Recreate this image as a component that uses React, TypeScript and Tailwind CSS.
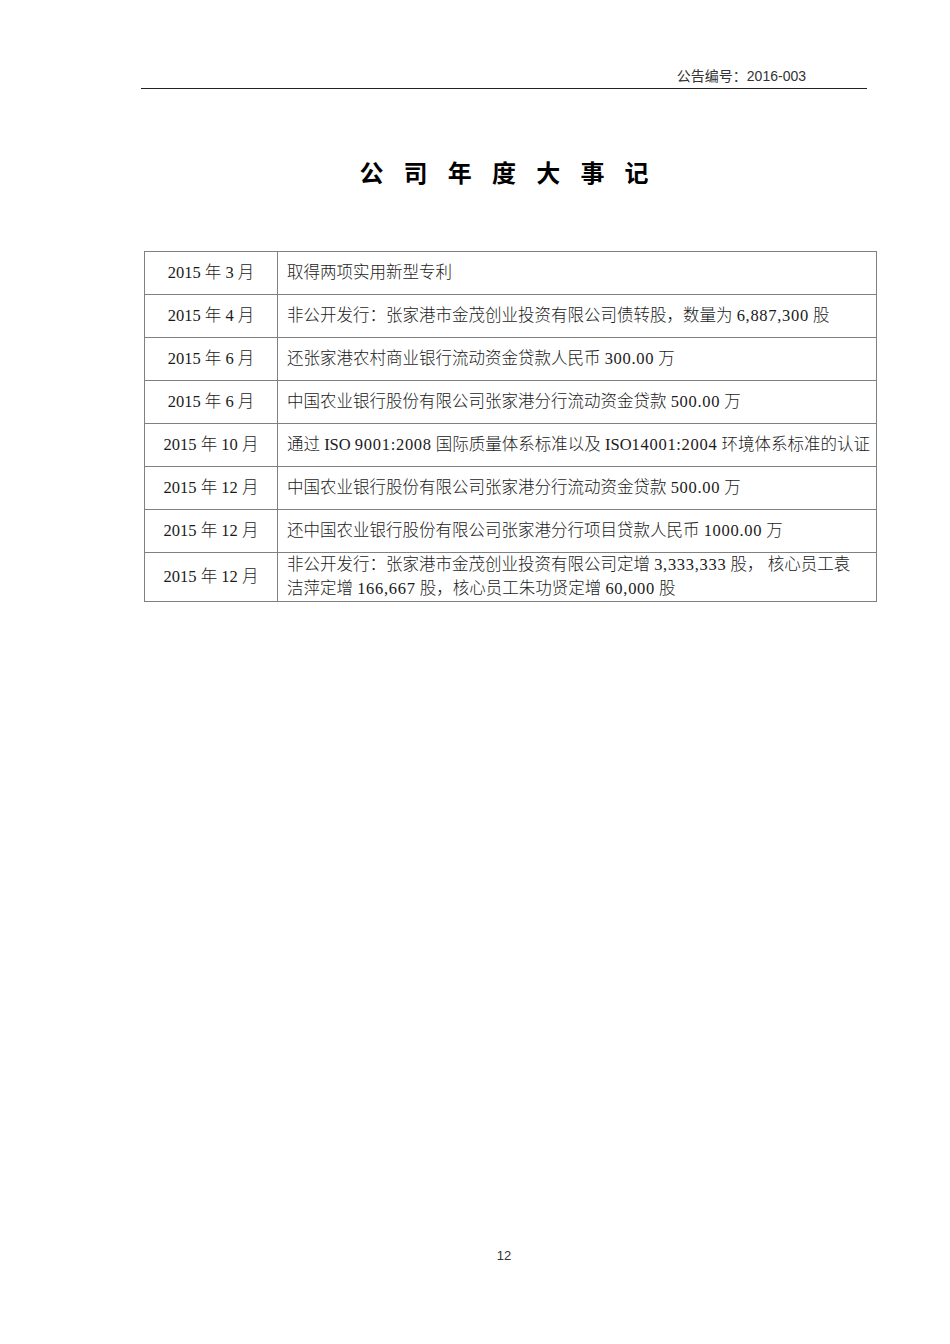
import { Fragment } from "react";

// numbers in the original are half-width SimSun; Times digits run a bit narrow, so loosen them slightly
function Txt({ s }: { s: string }) {
  const parts = s.split(/([0-9][0-9,.:]*)/);
  return (
    <>
      {parts.map((p, i) =>
        /^[0-9]/.test(p) ? (
          <span key={i} className="tracking-[0.7px]">
            {p}
          </span>
        ) : (
          <Fragment key={i}>{p}</Fragment>
        )
      )}
    </>
  );
}

const rows: { date: string; lines: string[] }[] = [
  { date: "2015 年 3 月", lines: ["取得两项实用新型专利"] },
  { date: "2015 年 4 月", lines: ["非公开发行：张家港市金茂创业投资有限公司债转股，数量为 6,887,300 股"] },
  { date: "2015 年 6 月", lines: ["还张家港农村商业银行流动资金贷款人民币 300.00 万"] },
  { date: "2015 年 6 月", lines: ["中国农业银行股份有限公司张家港分行流动资金贷款 500.00 万"] },
  { date: "2015 年 10 月", lines: ["通过 ISO 9001:2008 国际质量体系标准以及 ISO14001:2004 环境体系标准的认证"] },
  { date: "2015 年 12 月", lines: ["中国农业银行股份有限公司张家港分行流动资金贷款 500.00 万"] },
  { date: "2015 年 12 月", lines: ["还中国农业银行股份有限公司张家港分行项目贷款人民币 1000.00 万"] },
  {
    date: "2015 年 12 月",
    lines: [
      "非公开发行：张家港市金茂创业投资有限公司定增 3,333,333 股， 核心员工袁",
      "洁萍定增 166,667 股，核心员工朱功贤定增 60,000 股",
    ],
  },
];

export default function App() {
  return (
    <div className="w-[950px] h-[1344px] bg-white flex flex-col text-[#1a1a1a]">
      {/* page header */}
      <div className="ml-[141px] w-[726px] pt-[66px]">
        <div
          className="h-[23px] border-b-[1.5px] border-[#222] text-right pr-[61px] text-[14px] leading-[20px] text-[#333]"
          style={{ fontFamily: '"Liberation Sans","Noto Sans CJK SC",sans-serif' }}
        >
          公告编号：2016-003
        </div>

        {/* title */}
        <h1
          className="mt-[65px] text-center text-[24px] leading-[36px] font-bold tracking-[20.2px] pl-[20.2px] text-black"
          style={{ fontFamily: '"Noto Sans CJK SC",sans-serif' }}
        >
          公司年度大事记
        </h1>

        {/* events table */}
        <table
          className="mt-[61px] ml-[3px] w-[733px] border-collapse text-[16.5px]"
          style={{ fontFamily: '"Liberation Serif","Noto Sans CJK SC",serif' }}
        >
          <tbody>
            {rows.map((r, i) => {
              const last = i === rows.length - 1;
              return (
                <tr key={i} className={last ? "h-[48px]" : "h-[43px]"}>
                  <td className="w-[133px] border border-[#808080] text-center align-middle whitespace-nowrap font-light">
                    {r.date}
                  </td>
                  <td className="border border-[#808080] pl-[9px] pr-1 align-middle whitespace-nowrap font-light leading-[24px]">
                    {r.lines.map((l, j) => (
                      <div key={j}>
                        <Txt s={l} />
                      </div>
                    ))}
                  </td>
                </tr>
              );
            })}
          </tbody>
        </table>
      </div>

      {/* page number */}
      <div
        className="mt-auto pb-[78px] pl-[58px] text-center text-[13px] leading-[20px] text-[#333]"
        style={{ fontFamily: '"Liberation Sans",sans-serif' }}
      >
        12
      </div>
    </div>
  );
}
